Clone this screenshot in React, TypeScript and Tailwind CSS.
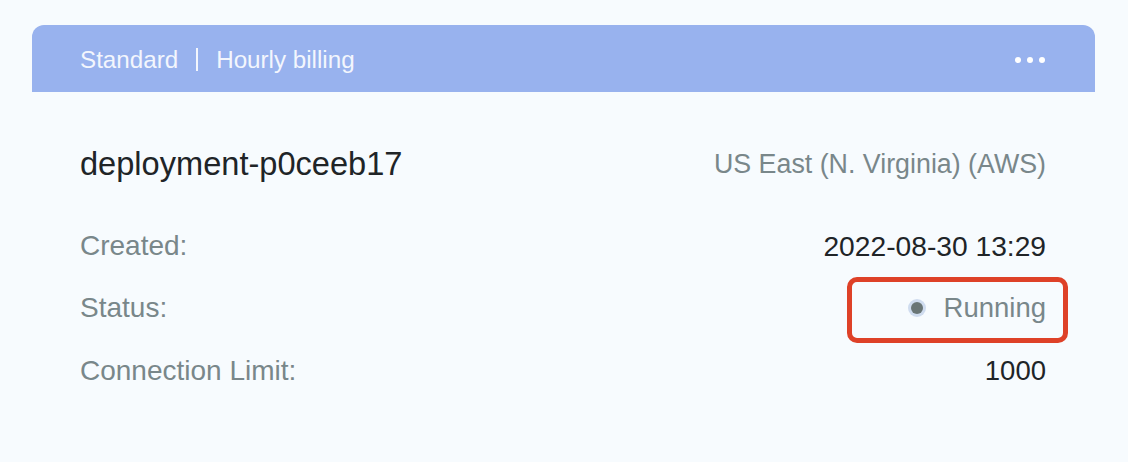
import React from "react";

const rows = [
  { label: "Created:", value: "2022-08-30 13:29" },
];

export default function App() {
  return (
    <div
      className="w-[1128px] h-[462px] bg-[#f7fbfe] pt-[25px] px-[32px]"
      style={{ fontFamily: '"Liberation Sans", Arial, sans-serif' }}
    >
      <div className="w-[1063px] h-[395px] bg-[#f7fbfe] rounded-t-[12px] overflow-hidden">
        <div className="h-[67px] bg-[#98b2ee] flex items-center justify-between pl-[48px] pr-[50px] pt-[3px] text-[#f3f6fd] text-[24.2px]">
          <div className="flex items-center">
            <span>Standard</span>
            <span className="mx-[18px] w-[2px] h-[23px] bg-[#f3f6fd]" />
            <span>Hourly billing</span>
          </div>
          <div className="flex items-center gap-[6px]">
            <span className="w-[6px] h-[6px] rounded-full bg-white" />
            <span className="w-[6px] h-[6px] rounded-full bg-white" />
            <span className="w-[6px] h-[6px] rounded-full bg-white" />
          </div>
        </div>
        <div className="pl-[48px] pr-[49px] pt-[52px]">
          <div className="flex items-center justify-between h-[40px]">
            <span className="text-[32.6px] text-[#202427]">deployment-p0ceeb17</span>
            <span className="text-[26.8px] text-[#79878a]">US East (N. Virginia) (AWS)</span>
          </div>
          {rows.map((r) => (
            <div key={r.label} className="flex items-center justify-between h-[36px] mt-[44px]">
              <span className="text-[28px] text-[#79878a]">{r.label}</span>
              <span className="text-[28.2px] text-[#202427]">{r.value}</span>
            </div>
          ))}
          <div className="flex items-center justify-between h-[36px] mt-[26px]">
            <span className="text-[28px] text-[#79878a]">Status:</span>
            <span className="relative flex items-center">
              <span className="w-[12px] h-[12px] rounded-full bg-[#6a7676] ring-[3px] ring-[#cfdcef] mr-[21px]" />
              <span className="text-[27.5px] text-[#79878a]">Running</span>
              <span className="absolute left-[-64px] right-[-22px] top-[-10px] h-[66px] border-[5px] border-[#de4128] rounded-[10px]" />
            </span>
          </div>
          <div className="flex items-center justify-between h-[36px] mt-[27px]">
            <span className="text-[28px] text-[#79878a]">Connection Limit:</span>
            <span className="text-[27.5px] text-[#202427]">1000</span>
          </div>
        </div>
      </div>
    </div>
  );
}
